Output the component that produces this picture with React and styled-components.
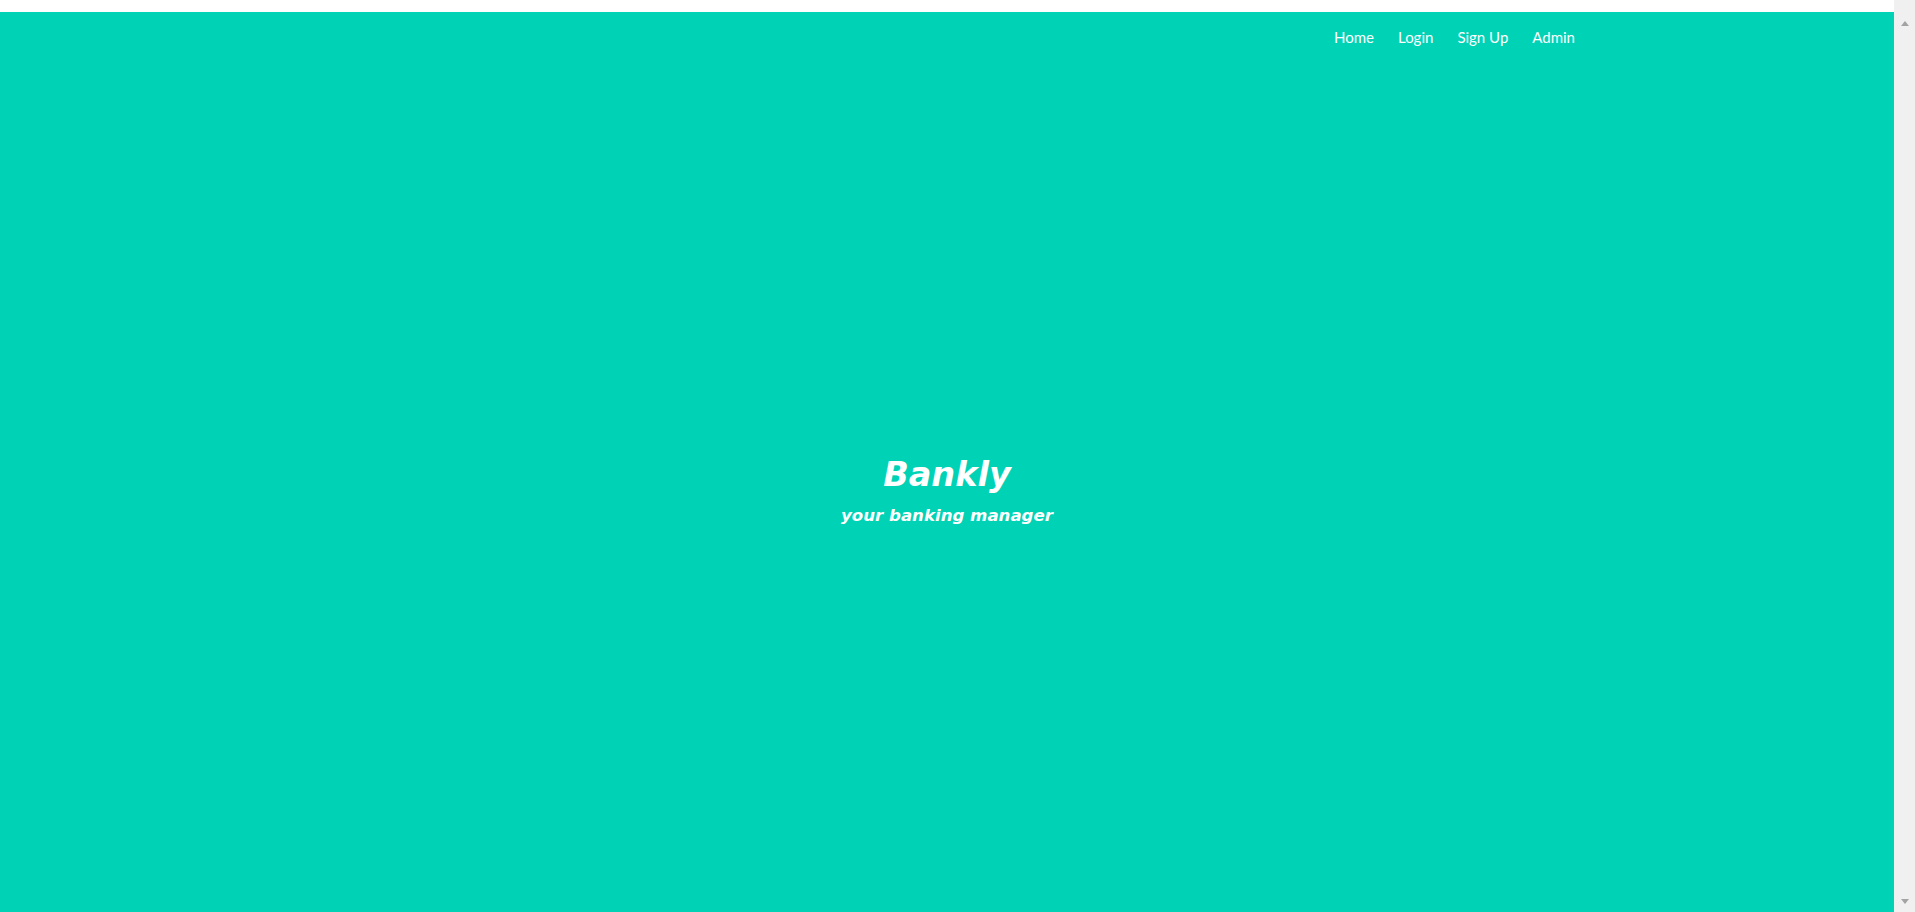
import React from "react";
import styled, { createGlobalStyle } from "styled-components";

const GlobalStyle = createGlobalStyle`
  html, body {
    margin: 0;
    padding: 0;
    background: #ffffff;
    overflow: hidden;
  }
  body {
    font-family: Lato, "Open Sans", sans-serif;
  }
`;

const Page = styled.div`
  display: flex;
  height: 100vh;
`;

const Main = styled.main`
  flex: 1;
  padding-top: 12px;
  overflow: hidden;
`;

const Hero = styled.section`
  background: #00d3b5;
  min-height: 940px;
  display: flex;
  flex-direction: column;
`;

const NavBar = styled.nav`
  display: flex;
  justify-content: flex-end;
  gap: 24px;
  padding: 16px 319px 0 0;
`;

const NavLink = styled.a`
  color: #ffffff;
  font-family: Lato, "Open Sans", sans-serif;
  font-size: 15px;
  line-height: 18px;
  text-decoration: none;
  cursor: pointer;
`;

const Brand = styled.div`
  display: flex;
  flex-direction: column;
  align-items: center;
  margin-top: 410px;
  color: #ffffff;
  font-family: "DejaVu Sans", Verdana, sans-serif;
  font-style: italic;
  font-weight: 700;
`;

const Title = styled.h1`
  margin: 0;
  font-size: 33.5px;
  line-height: 38px;
  font-weight: 700;
`;

const Tagline = styled.p`
  margin: 12px 0 0;
  font-size: 16.6px;
  line-height: 20px;
  font-weight: 700;
`;

const ScrollTrack = styled.div`
  width: 21px;
  flex-shrink: 0;
  background: #f0f0f0;
  display: flex;
  flex-direction: column;
  justify-content: space-between;
  align-items: center;
  padding: 21px 0 8px;
  box-sizing: border-box;
`;

const Arrow = styled.span`
  width: 0;
  height: 0;
  border-left: 4px solid transparent;
  border-right: 4px solid transparent;
  ${(p) =>
    p.$down
      ? "border-top: 5px solid #a3a3a3;"
      : "border-bottom: 5px solid #a3a3a3;"}
`;

export default function App() {
  const links = ["Home", "Login", "Sign Up", "Admin"];
  return (
    <Page>
      <GlobalStyle />
      <Main>
        <Hero>
          <NavBar>
            {links.map((l) => (
              <NavLink key={l}>{l}</NavLink>
            ))}
          </NavBar>
          <Brand>
            <Title>Bankly</Title>
            <Tagline>your banking manager</Tagline>
          </Brand>
        </Hero>
      </Main>
      <ScrollTrack>
        <Arrow />
        <Arrow $down />
      </ScrollTrack>
    </Page>
  );
}
